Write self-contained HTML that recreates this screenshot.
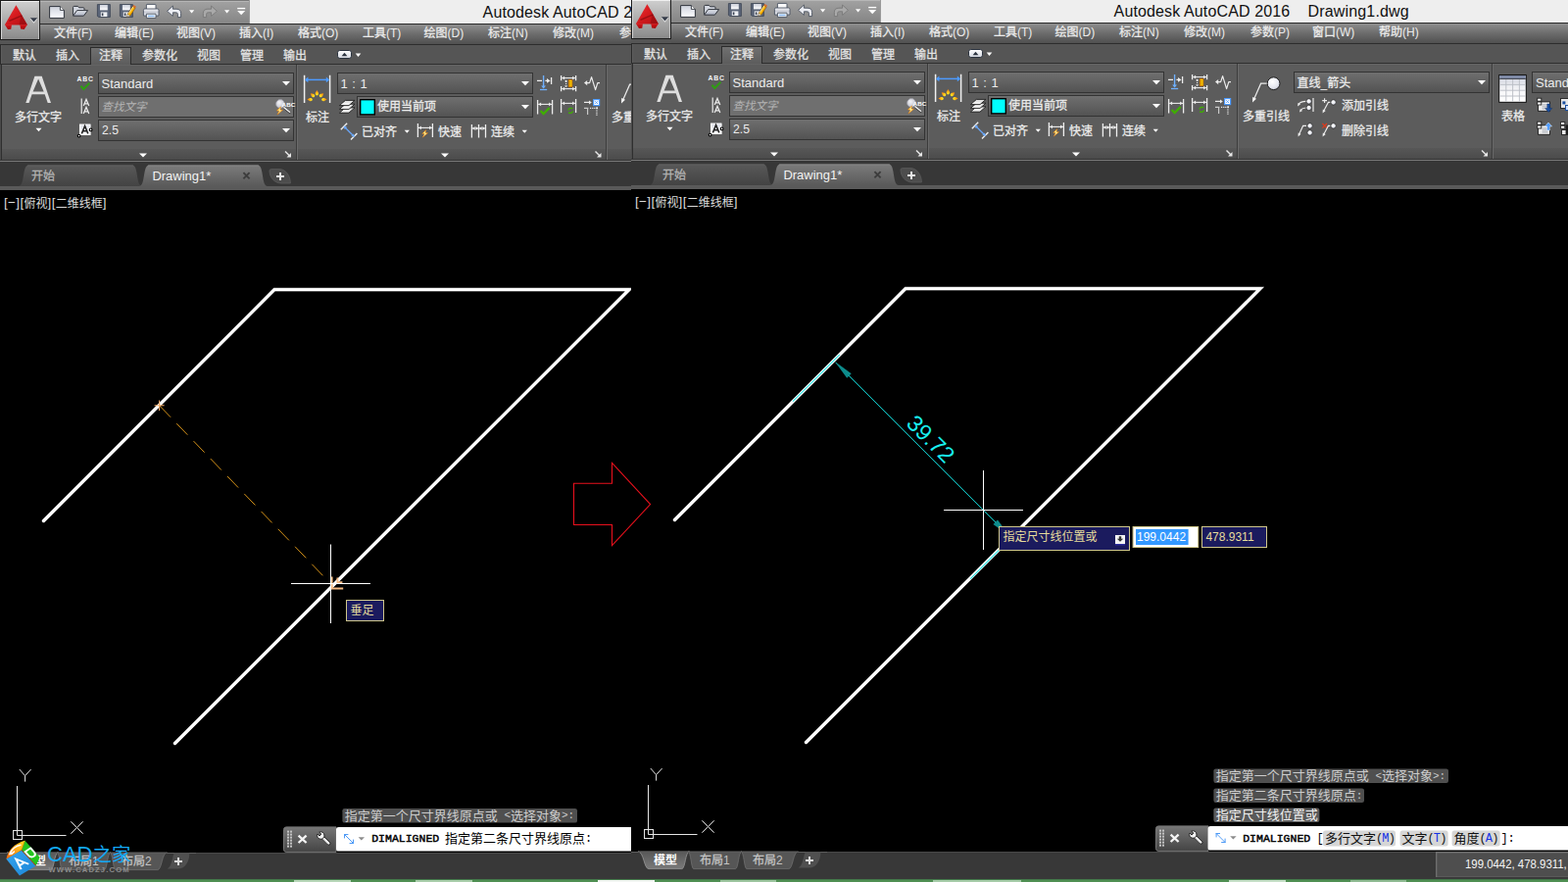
<!DOCTYPE html>
<html><head><meta charset="utf-8"><title>AutoCAD</title>
<style>
html,body{margin:0;padding:0;background:#000}
body{width:1600px;height:900px;overflow:hidden;position:relative;font-family:"Liberation Sans","Noto Sans CJK SC",sans-serif}
.w{position:absolute;overflow:hidden}
.a{position:absolute;left:0;top:0}
.t{position:absolute;white-space:pre;display:block}
.h{color:transparent;overflow:hidden}
.s{-webkit-text-stroke:0.26px}
</style></head><body>
<svg width="0" height="0" style="position:absolute"><defs>
<linearGradient id="gQat" x1="0" y1="0" x2="0" y2="1"><stop offset="0" stop-color="#a3a3a3"/><stop offset="1" stop-color="#858585"/></linearGradient>
<linearGradient id="gMenu" x1="0" y1="0" x2="0" y2="1"><stop offset="0" stop-color="#8e8e8e"/><stop offset="0.5" stop-color="#6c6c6c"/><stop offset="1" stop-color="#505050"/></linearGradient>
<linearGradient id="gStrip" x1="0" y1="0" x2="0" y2="1"><stop offset="0" stop-color="#575757"/><stop offset="1" stop-color="#4b4b4b"/></linearGradient>
<linearGradient id="gApp" x1="0" y1="0" x2="0" y2="1"><stop offset="0" stop-color="#cfcfcf"/><stop offset="1" stop-color="#8a8a8a"/></linearGradient>
<radialGradient id="gBall" cx="0.4" cy="0.35" r="0.8"><stop offset="0" stop-color="#ffffff"/><stop offset="0.6" stop-color="#e4e6ee"/><stop offset="1" stop-color="#b8bccb"/></radialGradient>
<linearGradient id="gFlame" x1="0" y1="0" x2="1" y2="0"><stop offset="0" stop-color="#fff02a"/><stop offset="0.45" stop-color="#ffc018"/><stop offset="1" stop-color="#ff7a00"/></linearGradient>
<linearGradient id="gBolt" x1="0" y1="0" x2="1" y2="1"><stop offset="0" stop-color="#ffb000"/><stop offset="0.5" stop-color="#fff6a0"/><stop offset="1" stop-color="#ff8a00"/></linearGradient>
<linearGradient id="gPaper" x1="0" y1="0" x2="0" y2="1"><stop offset="0" stop-color="#dcdfe8"/><stop offset="1" stop-color="#ffffff"/></linearGradient>
<linearGradient id="gLayer" x1="0" y1="0" x2="0" y2="1"><stop offset="0" stop-color="#d6d6d6"/><stop offset="1" stop-color="#ffffff"/></linearGradient>
<linearGradient id="gTable" x1="0" y1="0" x2="0" y2="1"><stop offset="0" stop-color="#cdd1dc"/><stop offset="0.55" stop-color="#f6f6f8"/><stop offset="1" stop-color="#ffffff"/></linearGradient>
<radialGradient id="gLens" cx="0.4" cy="0.35" r="0.8"><stop offset="0" stop-color="#f4f4f8"/><stop offset="1" stop-color="#b4b6c2"/></radialGradient>
<linearGradient id="gCmd" x1="0" y1="0" x2="0" y2="1"><stop offset="0" stop-color="#767676"/><stop offset="1" stop-color="#444444"/></linearGradient>
<linearGradient id="gLay" x1="0" y1="0" x2="0" y2="1"><stop offset="0" stop-color="#585858"/><stop offset="1" stop-color="#7a7a7a"/></linearGradient>
<linearGradient id="gRedA" x1="0" y1="0" x2="1" y2="1"><stop offset="0" stop-color="#f03034"/><stop offset="0.5" stop-color="#d41a1e"/><stop offset="1" stop-color="#b01014"/></linearGradient>
<linearGradient id="gFoot" x1="0" y1="0" x2="0" y2="1"><stop offset="0" stop-color="#d81418"/><stop offset="1" stop-color="#a40a0e"/></linearGradient>
<linearGradient id="gDocI" x1="0" y1="0" x2="0" y2="1"><stop offset="0" stop-color="#cfd3dd"/><stop offset="1" stop-color="#fbfbfd"/></linearGradient>
<linearGradient id="gFold" x1="0" y1="0" x2="0" y2="1"><stop offset="0" stop-color="#e2e5ec"/><stop offset="1" stop-color="#aab0c0"/></linearGradient>
<linearGradient id="gPrn" x1="0" y1="0" x2="0" y2="1"><stop offset="0" stop-color="#f4f5f8"/><stop offset="0.5" stop-color="#c9ccd6"/><stop offset="1" stop-color="#eceef2"/></linearGradient>
<linearGradient id="gCubeA" x1="0" y1="0" x2="1" y2="1"><stop offset="0" stop-color="#36a6f0"/><stop offset="1" stop-color="#1c86d8"/></linearGradient><linearGradient id="gCubeC" x1="0" y1="1" x2="1" y2="0"><stop offset="0" stop-color="#ff6a10"/><stop offset="1" stop-color="#ffe020"/></linearGradient>
<linearGradient id="gTab" x1="0" y1="0" x2="0" y2="1"><stop offset="0" stop-color="#707070"/><stop offset="1" stop-color="#5c5c5c"/></linearGradient>
<linearGradient id="gMin" x1="0" y1="0" x2="0" y2="1"><stop offset="0" stop-color="#ffffff"/><stop offset="1" stop-color="#d4d8e0"/></linearGradient>
<linearGradient id="gCombo" x1="0" y1="0" x2="0" y2="1"><stop offset="0" stop-color="#6f6f6f"/><stop offset="1" stop-color="#535353"/></linearGradient>
<linearGradient id="gDocI2" x1="0" y1="0" x2="0" y2="1"><stop offset="0" stop-color="#595959"/><stop offset="1" stop-color="#434343"/></linearGradient>
<linearGradient id="gDoc" x1="0" y1="0" x2="0" y2="1"><stop offset="0" stop-color="#7c7c7c"/><stop offset="1" stop-color="#5a5a5a"/></linearGradient>
</defs></svg>
<div class="w" style="left:0px;top:0px;width:644px;height:900px">
<svg class="a" width="644" height="900" viewBox="0 0 644 900">
<rect x="254" y="0" width="390" height="24" fill="#eeeeee" />
<rect x="41" y="0" width="214" height="24" fill="url(#gQat)" />
<rect x="41" y="0" width="214" height="1" fill="#7a7a7a" />
<rect x="41" y="1" width="214" height="1" fill="#b6b6b6" />
<rect x="254" y="0" width="1" height="24" fill="#9a9a9a" />
<rect x="41" y="24" width="603" height="1" fill="#2b2b2b" />
<rect x="41" y="25" width="603" height="20" fill="url(#gMenu)" />
<rect x="0" y="45" width="644" height="1" fill="#2d2d2d" />
<rect x="0" y="41" width="41" height="4" fill="#555555" />
<rect x="0" y="46" width="644" height="19" fill="#555555" />
<rect x="0" y="65" width="644" height="1" fill="#2e2e2e" />
<rect x="0" y="66" width="644" height="99" fill="#5c5c5c" />
<rect x="0" y="152" width="644" height="11" fill="url(#gStrip)" />
<rect x="0" y="163" width="644" height="1" fill="#343434" />
<rect x="0" y="164" width="644" height="1" fill="#787878" />
<rect x="0" y="165" width="644" height="25" fill="#373737" />
<rect x="0" y="190" width="644" height="4" fill="#5a5a5a" />
<rect x="0" y="870" width="644" height="29" fill="#383838" />
<rect x="0" y="870" width="644" height="1" fill="#484848" />
<rect x="0" y="0" width="41" height="41" fill="#1c1c1c" />
<rect x="1" y="1" width="39" height="39" fill="url(#gApp)" />
<polyline points="44.5,531.5 280,295.5 642,295.5 178.5,758.5" fill="none" stroke="#fff" stroke-width="3.4" stroke-linecap="round" stroke-linejoin="miter"/>
<rect x="0" y="46" width="1" height="19" fill="#2b2b2b" />
<rect x="1" y="46" width="1" height="19" fill="#5e5e5e" />
<rect x="92" y="48" width="42" height="18" fill="#2b2b2b" />
<rect x="93" y="49" width="40" height="17" fill="url(#gTab)" />
<rect x="344.5" y="51.5" width="14" height="8" rx="2.2" fill="url(#gMin)" stroke="#2c3440" stroke-width="1"/>
<path d="M348.6 57.2L351.5 53.8L354.4 57.2Z" fill="#2c3440" stroke="none" stroke-width="1" />
<path d="M362.7 54.6L368.3 54.6L365.5 58Z" fill="#fff" stroke="none" stroke-width="1" />
<rect x="0" y="66" width="1" height="97" fill="#4a4a4a" />
<rect x="1" y="66" width="1" height="97" fill="#2f2f2f" />
<rect x="2" y="66" width="644" height="1" fill="#646464" />
<path d="M26.3 105L35.4 77.8H42.7L52 105H48.7L45.7 96.3H32.6L29.6 105ZM33.6 93.5H44.7L39.1 80.6Z" fill="#dedede" stroke="none" stroke-width="1" fill-rule="evenodd"/>
<path d="M36.5 130.8L42.5 130.8L39.5 134.2Z" fill="#fff" stroke="none" stroke-width="1" />
<rect x="100" y="74" width="200" height="22" fill="#333" />
<rect x="101" y="75" width="198" height="20" fill="url(#gCombo)" />
<path d="M288 83.1L296 83.1L292 87.3Z" fill="#fff" stroke="none" stroke-width="1" />
<rect x="100" y="98" width="200" height="22" fill="#333" />
<rect x="101" y="99" width="198" height="20" fill="#6f6f6f" />
<rect x="100" y="122" width="200" height="22" fill="#333" />
<rect x="101" y="123" width="198" height="20" fill="url(#gCombo)" />
<path d="M288 131.1L296 131.1L292 135.3Z" fill="#fff" stroke="none" stroke-width="1" />
<path d="M142 156.6L150 156.6L146 160.6Z" fill="#fff" stroke="none" stroke-width="1" />
<path d="M291 154.5L296 159.5" fill="none" stroke="#e8e8e8" stroke-width="1.4" />
<path d="M297 156L297 160.5L292.5 160.5Z" fill="#e8e8e8" stroke="none" stroke-width="1" />
<rect x="302" y="66" width="1" height="97" fill="#3c3c3c" />
<rect x="303" y="66" width="1" height="97" fill="#6a6a6a" />
<rect x="344" y="74" width="200" height="22" fill="#333" />
<rect x="345" y="75" width="198" height="20" fill="url(#gCombo)" />
<path d="M532 83.1L540 83.1L536 87.3Z" fill="#fff" stroke="none" stroke-width="1" />
<rect x="364" y="98" width="180" height="22" fill="#333" />
<rect x="365" y="99" width="178" height="20" fill="url(#gCombo)" />
<path d="M532 107.1L540 107.1L536 111.3Z" fill="#fff" stroke="none" stroke-width="1" />
<rect x="367" y="101" width="16" height="16.6" fill="#000" />
<rect x="368.4" y="102.4" width="13.2" height="13.8" fill="#00ffff" />
<path d="M412.7 132.8L417.9 132.8L415.3 135.8Z" fill="#fff" stroke="none" stroke-width="1" />
<path d="M532.7 132.8L537.9 132.8L535.3 135.8Z" fill="#fff" stroke="none" stroke-width="1" />
<path d="M450 156.6L458 156.6L454 160.6Z" fill="#fff" stroke="none" stroke-width="1" />
<path d="M607.5 154.5L612.5 159.5" fill="none" stroke="#e8e8e8" stroke-width="1.4" />
<path d="M613.5 156L613.5 160.5L609 160.5Z" fill="#e8e8e8" stroke="none" stroke-width="1" />
<rect x="618" y="66" width="1" height="97" fill="#3c3c3c" />
<rect x="619" y="66" width="1" height="97" fill="#6a6a6a" />
<path d="M19 190C25.5 190 22.5 168.5 29 168.5L135 168.5C141.5 168.5 138.5 190 145 190Z" fill="url(#gDocI2)" />
<path d="M28 169H136" fill="none" stroke="#666" stroke-width="0.8" />
<path d="M142 190C148.5 190 145.5 168.5 152 168.5L263 168.5C269.5 168.5 266.5 190 273 190Z" fill="url(#gDoc)" />
<path d="M151 169H264" fill="none" stroke="#8c8c8c" stroke-width="0.8" />
<path d="M248.4 176.2L254.6 182.4M254.6 176.2L248.4 182.4" fill="none" stroke="#3c3c3c" stroke-width="1.9" />
<path d="M275 174C275 173 276 172.6 278 172.6L285 172.6C292 172.6 296.4 180 296.4 187L287 187C280 187 275 181 275 174Z" fill="#4d4d4d" stroke="#5c5c5c" stroke-width="0.8" />
<path d="M282 180h8M286 176v8" fill="none" stroke="#e6e6e6" stroke-width="2" />
<path d="M82.4 87.8L85.4 91L91.4 84.6" fill="none" stroke="#2f9e12" stroke-width="2.1" />
<path d="M83.2 100.5V116" fill="none" stroke="#ececec" stroke-width="1.2" />
<path d="M85.2 108L88 101.4L90.8 108M86.2 105.8H89.8" fill="none" stroke="#ececec" stroke-width="1.2" />
<path d="M85.2 116L88 109.4L90.8 116M86.2 113.8H89.8" fill="none" stroke="#ececec" stroke-width="1.2" />
<rect x="81" y="126.7" width="11.4" height="11.2" fill="url(#gPaper)" />
<rect x="81.5" y="127.2" width="10.4" height="10.2" fill="none" stroke="#fafafa" stroke-width="1"/>
<path d="M83.4 136.4L86.6 128.6L89.8 136.4M84.6 133.8H88.6" fill="none" stroke="#222" stroke-width="1.5" />
<circle cx="92.6" cy="132.4" r="1.35" fill="#fff" stroke="#000" stroke-width="1.1"/>
<circle cx="80.6" cy="138.6" r="1.35" fill="#fff" stroke="#000" stroke-width="1.1"/>
<circle cx="286" cy="106" r="4.4" fill="url(#gLens)" stroke="#9a9aa4" stroke-width="0.8"/>
<path d="M289.6 109.8L296.4 115.2" fill="none" stroke="#3a3a3a" stroke-width="2.6" />
<path d="M289.4 109.4L296.2 114.8" fill="none" stroke="#f0f0f0" stroke-width="1.4" />
<g transform="translate(285.4 112.8) scale(0.95)"><path d="M1.2 -4.2L-3.2 0.2L-0.6 0.4L-2.6 4.4L3.4 -0.6L0.6 -0.8Z" fill="url(#gBolt)" stroke="#e07000" stroke-width="0.5"/></g>
<path d="M310.6 76.8V105M336.6 76.8V105" fill="none" stroke="#efefef" stroke-width="1.5" />
<path d="M312 81.4H335" fill="none" stroke="#4d9bff" stroke-width="1.5" />
<path d="M311 81.4l3.4 -2.8v5.6ZM336.2 81.4l-3.4 -2.8v5.6Z" fill="#4d9bff" stroke="none" stroke-width="1" />
<g transform="translate(323.4 95.2) rotate(-90)"><path d="M-2.2 0C-2.2 -1.7 -0.4 -1.9 0.6 -1.5L3.2 0L0.6 1.5C-0.4 1.9 -2.2 1.7 -2.2 0Z" fill="url(#gFlame)"/></g>
<g transform="translate(319.2 97.3) rotate(-140)"><path d="M-2.2 0C-2.2 -1.7 -0.4 -1.9 0.6 -1.5L3.2 0L0.6 1.5C-0.4 1.9 -2.2 1.7 -2.2 0Z" fill="url(#gFlame)"/></g>
<g transform="translate(327.8 97.3) rotate(-40)"><path d="M-2.2 0C-2.2 -1.7 -0.4 -1.9 0.6 -1.5L3.2 0L0.6 1.5C-0.4 1.9 -2.2 1.7 -2.2 0Z" fill="url(#gFlame)"/></g>
<g transform="translate(316.6 101.6) rotate(180)"><path d="M-2.2 0C-2.2 -1.7 -0.4 -1.9 0.6 -1.5L3.2 0L0.6 1.5C-0.4 1.9 -2.2 1.7 -2.2 0Z" fill="url(#gFlame)"/></g>
<g transform="translate(330.4 101.6) rotate(0)"><path d="M-2.2 0C-2.2 -1.7 -0.4 -1.9 0.6 -1.5L3.2 0L0.6 1.5C-0.4 1.9 -2.2 1.7 -2.2 0Z" fill="url(#gFlame)"/></g>
<path d="M352.4 109.9H362L356 115.1H346.4Z" fill="url(#gLayer)" stroke="#1e1e1e" stroke-width="0.9" />
<path d="M352.4 106.2H362L356 111.4H346.4Z" fill="url(#gLayer)" stroke="#1e1e1e" stroke-width="0.9" />
<path d="M352.4 102.4H362L356 107.6H346.4Z" fill="url(#gLayer)" stroke="#1e1e1e" stroke-width="0.9" />
<path d="M347.8 132.2L354.2 125.8M358 142.4L364.4 136" fill="none" stroke="#f0f0f0" stroke-width="1.4" />
<path d="M351.6 129.6L361 139" fill="none" stroke="#6aa9ff" stroke-width="1.3" />
<path d="M350.60 128.60L354.21 129.80L351.80 132.21Z" fill="#6aa9ff" stroke="none" stroke-width="1" />
<path d="M362.00 140.00L358.39 138.80L360.80 136.39Z" fill="#6aa9ff" stroke="none" stroke-width="1" />
<path d="M426.4 126V140M441.4 126V140" fill="none" stroke="#f0f0f0" stroke-width="1.3" />
<path d="M427 130.4H441" fill="none" stroke="#f0f0f0" stroke-width="1.1" />
<path d="M427.2 130.4l2.7 -1.9v3.8Z" fill="#f0f0f0" stroke="none" stroke-width="1" />
<path d="M440.8 130.4l-2.7 -1.9v3.8Z" fill="#f0f0f0" stroke="none" stroke-width="1" />
<g transform="translate(433.6 136.2) scale(0.9)"><path d="M1.2 -4.2L-3.2 0.2L-0.6 0.4L-2.6 4.4L3.4 -0.6L0.6 -0.8Z" fill="url(#gBolt)" stroke="#e07000" stroke-width="0.5"/></g>
<path d="M481.4 127V140.6M488.5 127V140.6M495.5 127V140.6" fill="none" stroke="#f0f0f0" stroke-width="1.3" />
<path d="M482 131H488" fill="none" stroke="#f0f0f0" stroke-width="1" />
<path d="M482.2 131l2.3 -1.9v3.8Z" fill="#f0f0f0" stroke="none" stroke-width="1" />
<path d="M487.8 131l-2.3 -1.9v3.8Z" fill="#f0f0f0" stroke="none" stroke-width="1" />
<path d="M489 131H495" fill="none" stroke="#f0f0f0" stroke-width="1" />
<path d="M489.2 131l2.3 -1.9v3.8Z" fill="#f0f0f0" stroke="none" stroke-width="1" />
<path d="M494.8 131l-2.3 -1.9v3.8Z" fill="#f0f0f0" stroke="none" stroke-width="1" />
<path d="M548 82.4H553M556.4 82.4H559" fill="none" stroke="#ececec" stroke-width="1.3" />
<path d="M561.6 82.4l-3.6 -2.4v4.8Z" fill="#ececec" stroke="none" stroke-width="1" />
<path d="M562.6 79V86" fill="none" stroke="#ececec" stroke-width="1.3" />
<path d="M554.6 77V88" fill="none" stroke="#6fb0ff" stroke-width="1.4" />
<path d="M554.6 90.6l-2.4 -3h4.8Z" fill="#6fb0ff" stroke="none" stroke-width="1" />
<path d="M551 91.5H558.2" fill="none" stroke="#6fb0ff" stroke-width="1.3" />
<path d="M572.6 77V82.2M587.6 77V82.2M572.6 88V93.2M587.6 88V93.2" fill="none" stroke="#ececec" stroke-width="1.3" />
<path d="M573.2 79.6H587" fill="none" stroke="#ececec" stroke-width="1.1" />
<path d="M573.4 79.6l2.7 -1.9v3.8Z" fill="#ececec" stroke="none" stroke-width="1" />
<path d="M586.8 79.6l-2.7 -1.9v3.8Z" fill="#ececec" stroke="none" stroke-width="1" />
<path d="M573.2 90.6H587" fill="none" stroke="#ececec" stroke-width="1.1" />
<path d="M573.4 90.6l2.7 -1.9v3.8Z" fill="#ececec" stroke="none" stroke-width="1" />
<path d="M586.8 90.6l-2.7 -1.9v3.8Z" fill="#ececec" stroke="none" stroke-width="1" />
<path d="M577.6 83V87.6" fill="none" stroke="#ececec" stroke-width="1.2" stroke-dasharray="1 1"/>
<path d="M577.6 81.6l-1.6 1.6h3.2ZM577.6 89l-1.6 -1.6h3.2Z" fill="#ececec" stroke="none" stroke-width="1" />
<rect x="580" y="81.2" width="4" height="7.8" fill="#ffd400" />
<rect x="580.3" y="81.5" width="3.6" height="7.2" fill="none" stroke="#b86200" stroke-width="0.8"/>
<path d="M580.6 83.4h2M580.6 85.2h2M580.6 87h2" fill="none" stroke="#b86200" stroke-width="0.7" />
<path d="M598.5 84.6H601.6L603.6 78.6L607.6 91.6L609.8 84.6H612" fill="none" stroke="#ececec" stroke-width="1.2" stroke-linejoin="round"/>
<path d="M596 84.6l3.2 -2.6v5.2Z" fill="#ececec" stroke="none" stroke-width="1" />
<path d="M548.6 102V116.4M563.6 102V116.4" fill="none" stroke="#ececec" stroke-width="1.3" />
<path d="M549.2 106.4H563" fill="none" stroke="#ececec" stroke-width="1.1" />
<path d="M549.4 106.4l2.7 -1.9v3.8Z" fill="#ececec" stroke="none" stroke-width="1" />
<path d="M562.8 106.4l-2.7 -1.9v3.8Z" fill="#ececec" stroke="none" stroke-width="1" />
<path d="M551.6 113L554.6 116L560.6 110" fill="none" stroke="#3fae00" stroke-width="2.4" />
<path d="M572.6 101V115M587.6 101V115" fill="none" stroke="#ececec" stroke-width="1.3" />
<path d="M573.2 105.4H587" fill="none" stroke="#ececec" stroke-width="1.1" />
<path d="M573.4 105.4l2.7 -1.9v3.8Z" fill="#ececec" stroke="none" stroke-width="1" />
<path d="M586.8 105.4l-2.7 -1.9v3.8Z" fill="#ececec" stroke="none" stroke-width="1" />
<path d="M580 112.6A2.3 2.3 0 0 1 583.6 110.8M584.4 113.2A2.3 2.3 0 0 1 580.8 115" fill="none" stroke="#3fae00" stroke-width="1.2" />
<path d="M584.6 110l-2.4 -0.2l1.6 2ZM579.8 115.8l2.4 0.2l-1.6 -2Z" fill="#3fae00" stroke="none" stroke-width="1" />
<path d="M596 104.4H601.6" fill="none" stroke="#ececec" stroke-width="1.2" />
<path d="M603.8 104.4l-2.8 -2v4Z" fill="#ececec" stroke="none" stroke-width="1" />
<rect x="605" y="101" width="7.2" height="7.2" fill="#4d9bff" />
<rect x="606.2" y="102.2" width="4.8" height="4.8" fill="#fff" />
<path d="M607.2 103.2l2.8 2.8M610 103.2l-2.8 2.8" fill="none" stroke="#4d9bff" stroke-width="0.9" />
<path d="M596 110.4H600.4M599.6 110V117" fill="none" stroke="#c8c8c8" stroke-width="1.2" />
<rect x="602" y="109.8" width="1.2" height="1.2" fill="#ececec" />
<rect x="604.2" y="109.8" width="1.2" height="1.2" fill="#ececec" />
<rect x="606.2" y="109.8" width="1.2" height="1.2" fill="#ececec" />
<rect x="608.2" y="109.4" width="1.8" height="1.8" fill="#f4f4f4" />
<rect x="608.3" y="112.4" width="1.3" height="1.1" fill="#ececec" />
<rect x="608.3" y="114.6" width="1.3" height="1.1" fill="#ececec" />
<rect x="608.3" y="116.6" width="1.3" height="1.1" fill="#ececec" />
<path d="M649 86.2H642.6L635.2 103" fill="none" stroke="#ececec" stroke-width="1.2" />
<path d="M634.00 105.60L634.19 100.00L638.03 101.70Z" fill="#f4f4f4" stroke="none" stroke-width="1" />
<circle cx="655.6" cy="86.2" r="6.4" fill="url(#gBall)" stroke="#1c1c1c" stroke-width="1"/>
<path d="M17.5 802V852.5H67.5" fill="none" stroke="#e4e4e4" stroke-width="1" />
<rect x="13.5" y="847.5" width="9" height="9" fill="none" stroke="#e4e4e4" stroke-width="1"/>
<path d="M19.8 785L25.6 791.6L31.6 785M25.6 791.6V797.6" fill="none" stroke="#e4e4e4" stroke-width="1" />
<path d="M72.3 838.3L84.7 850.7M84.7 838.3L72.3 850.7" fill="none" stroke="#e4e4e4" stroke-width="1" />
<rect x="1" y="1" width="39" height="1" fill="#f0f0f0" />
<rect x="1" y="2" width="1" height="38" fill="#d6d6d6" />
<rect x="39" y="2" width="1" height="38" fill="#bcbcbc" />
<path d="M16.4 5.2L28 25.4H4.8Z" fill="url(#gRedA)" stroke="none" stroke-width="1" />
<path d="M16.4 5.2L28 25.4H19.6L21.6 15.2Z" fill="#8a0c10" stroke="none" stroke-width="1" opacity="0.5"/>
<path d="M9 20.8L22.2 15.2L22.6 16.6L9.8 22Z" fill="#6e080c" stroke="none" stroke-width="1" opacity="0.55"/>
<path d="M5 25.2H11.9L11.3 29.7L8 29.9Z" fill="url(#gFoot)" stroke="none" stroke-width="1" />
<path d="M20.3 25.2H27.8L24.7 29.9L21.1 29.5Z" fill="url(#gFoot)" stroke="none" stroke-width="1" />
<path d="M30.8 18.2H38.2L34.5 22.8Z" fill="#f4f4f4" stroke="none" stroke-width="1" transform="translate(0 0.9)"/>
<path d="M30.8 18.2H38.2L34.5 22.6Z" fill="#363d4a" stroke="none" stroke-width="1" />
<path d="M50.6 6.6H61.4L65.4 10.4V18.4H50.6Z" fill="url(#gDocI)" stroke="#30343c" stroke-width="1" />
<path d="M61.4 6.6V10.4H65.4" fill="#fff" stroke="#30343c" stroke-width="0.9" />
<path d="M74.6 15.8V7.4Q74.6 6.4 75.6 6.4H79.4L80.6 7.8H85Q86 7.8 86 8.8V10.4" fill="#d5d9e2" stroke="#30343c" stroke-width="1" />
<path d="M74.6 16.2L78.6 10.6H89.6L85.4 16.2Z" fill="url(#gFold)" stroke="#30343c" stroke-width="1" />
<path d="M99.4 4.6H112.4V17.4H100.6L99.4 16.2Z" fill="#5b6578" stroke="#3a4252" stroke-width="0.8" />
<rect x="102" y="5" width="7.8" height="5.4" fill="url(#gDocI)" />
<rect x="102.8" y="12.4" width="6.6" height="4.6" fill="#eef0f4" />
<rect x="103.8" y="13.4" width="1.6" height="2.8" fill="#3a4252" />
<path d="M122.4 4.6H135.4V17.4H123.6L122.4 16.2Z" fill="#5b6578" stroke="#3a4252" stroke-width="0.8" />
<rect x="125" y="5" width="7.8" height="5.4" fill="url(#gDocI)" />
<rect x="125.8" y="12.4" width="6.6" height="4.6" fill="#eef0f4" />
<rect x="126.8" y="13.4" width="1.6" height="2.8" fill="#3a4252" />
<path d="M130.2 14.4L135.4 6.4L138 8.2L132.8 16.2L129.8 17.2Z" fill="#ffb400" stroke="#7a4a00" stroke-width="0.6" />
<path d="M135.4 6.4L136.4 5L139 6.8L138 8.2Z" fill="#d86a2a" stroke="none" stroke-width="1" />
<path d="M130.2 14.4L129.8 17.2L132.8 16.2Z" fill="#f4f4f4" stroke="#555" stroke-width="0.4" />
<path d="M131.4 13.6L136 6.8" fill="none" stroke="#fff6c0" stroke-width="0.8" />
<path d="M149.4 10V5Q149.4 4.4 150 4.4H158.4Q159 4.4 159 5V10" fill="#fafafa" stroke="#4a5262" stroke-width="0.9" />
<path d="M146.4 16V10.4Q146.4 9 147.8 9H160.6Q162 9 162 10.4V16Z" fill="url(#gPrn)" stroke="#4a5262" stroke-width="0.9" />
<path d="M149.4 14.2H159V18.4H149.4Z" fill="#fff" stroke="#4a5262" stroke-width="0.9" />
<rect x="150.8" y="15.6" width="6.8" height="1.6" fill="#8ab8ee" />
<path d="M170.6 11.4L176.4 6V9.2H180Q184.6 9.2 184.6 13.6V17.6H181.4V14.4Q181.4 12.8 179.6 12.8H176.4V16.4Z" fill="#eceef4" stroke="#4c5260" stroke-width="0.9" />
<path d="M193 10.2H198.2L195.6 13.4Z" fill="#fff" stroke="none" stroke-width="1" />
<path d="M221.4 11.4L215.6 6V9.2H212Q207.4 9.2 207.4 13.6V17.6H210.6V14.4Q210.6 12.8 212.4 12.8H215.6V16.4Z" fill="#a9a9a9" stroke="#787878" stroke-width="0.9" />
<path d="M229 10.2H234.2L231.6 13.4Z" fill="#fff" stroke="none" stroke-width="1" />
<path d="M242.2 8.6H250.2" fill="none" stroke="#fff" stroke-width="1.4" />
<path d="M242.2 11H250.2L246.2 15.2Z" fill="#fff" stroke="none" stroke-width="1" />
<path d="M112 870C115.3 870 115.3 887.6 118 887.6L160.8 887.6C165.165 887.6 165.165 870 170.5 870Z" fill="#565656" stroke="#6c6c6c" stroke-width="0.9"/>
<path d="M58 870C61.19 870 61.19 887.6 63.8 887.6L106.5 887.6C109.425 887.6 109.425 870 113 870Z" fill="#565656" stroke="#6c6c6c" stroke-width="0.9"/>
<path d="M7 870C13.05 870 13.05 887.6 18 887.6L51.8 887.6C55.265 887.6 55.265 870 59.5 870Z" fill="url(#gLay)" stroke="#909090" stroke-width="0.9"/>
<rect x="0" y="870" width="200" height="1" fill="#5c5c5c" />
<path d="M178 870H193.4C193.4 878 190 886.6 181 886.6H170.5C176 884 176 872 178 870Z" fill="#505050" stroke="none" stroke-width="1" />
<path d="M178 879.1h8M182 875.1v8" fill="none" stroke="#dcdcdc" stroke-width="2" />
<line x1="163" y1="414.2" x2="335.6" y2="593.7" stroke="#e09a1a" stroke-width="0.95" stroke-dasharray="16 8.9"/>
<path d="M157.6 413.8H167.6M162.6 408.4V419" fill="none" stroke="#f2aa6a" stroke-width="1.1" />
<path d="M338.6 588.4V600.4H350.2" fill="none" stroke="#f8bd86" stroke-width="2" />
<path d="M344.4 589.6V594.2H349.4" fill="none" stroke="#f8bd86" stroke-width="1.8" />
<path d="M297 595.5H378M337.5 555.5V636" fill="none" stroke="#ffffff" stroke-width="1" />
<rect x="353.5" y="612.5" width="38" height="21" fill="#1b1b5e" stroke="#cfc78a" stroke-width="1"/>
<rect x="349.4" y="825" width="239.6" height="14.6" rx="2.2" fill="#4f4f4f"/>
<path d="M289.5 846.5q0 -2.6 2.6 -2.6H343V869.4H292.1q-2.6 0 -2.6 -2.6Z" fill="url(#gCmd)" stroke="#767676" stroke-width="1"/>
<rect x="293" y="847.6" width="2" height="2" fill="#c4c4c4" />
<rect x="296" y="847.6" width="2" height="2" fill="#c4c4c4" />
<rect x="293" y="850.6" width="2" height="2" fill="#c4c4c4" />
<rect x="296" y="850.6" width="2" height="2" fill="#c4c4c4" />
<rect x="293" y="853.6" width="2" height="2" fill="#c4c4c4" />
<rect x="296" y="853.6" width="2" height="2" fill="#c4c4c4" />
<rect x="293" y="856.6" width="2" height="2" fill="#c4c4c4" />
<rect x="296" y="856.6" width="2" height="2" fill="#c4c4c4" />
<rect x="293" y="859.6" width="2" height="2" fill="#c4c4c4" />
<rect x="296" y="859.6" width="2" height="2" fill="#c4c4c4" />
<rect x="293" y="862.6" width="2" height="2" fill="#c4c4c4" />
<rect x="296" y="862.6" width="2" height="2" fill="#c4c4c4" />
<path d="M304.6 852.6l8 7.4M312.6 852.6l-8 7.4" fill="none" stroke="#f4f4f4" stroke-width="2.3" />
<g transform="translate(330.6 855.8) rotate(-45)"><path d="M-1.5 -2.5V7.6Q0 9.4 1.5 7.6V-2.5Z" fill="#f6f6f6" stroke="#1e1e1e" stroke-width="0.9"/><path d="M-1.35 -8.1A3.7 3.7 0 1 0 1.35 -8.1V-5.2H-1.35Z" fill="#f6f6f6" stroke="#1e1e1e" stroke-width="0.9"/><path d="M-0.9 -1.4V6.6" stroke="#c8c8c8" stroke-width="0.7"/></g>
<path d="M343 846.6q0 -2.6 2.6 -2.6H743V868.6H345.6q-2.6 0 -2.6 -2.6Z" fill="#ffffff"/>
<path d="M351.5 851.5L360.5 860.5M351.5 851.2V855.4M351.2 851.5H355.4M360.5 860.8V856.6M360.8 860.5H356.6" fill="none" stroke="#4f9bf6" stroke-width="1" />
<path d="M365.6 854.2h6.4l-3.2 3.4Z" fill="#8c8c8c" stroke="none" stroke-width="1" />
</svg>
<span class="t s" style="left:55.0px;top:27.3px;font-size:12px;line-height:14px;width:26.0px;color:#ececec">文件</span>
<span class="t" style="left:79.00px;top:27.34px;font-size:12px;line-height:14px;color:#ececec">(F)</span>
<span class="t s" style="left:117.0px;top:27.3px;font-size:12px;line-height:14px;width:26.0px;color:#ececec">编辑</span>
<span class="t" style="left:141.00px;top:27.34px;font-size:12px;line-height:14px;color:#ececec">(E)</span>
<span class="t s" style="left:180.0px;top:27.3px;font-size:12px;line-height:14px;width:26.0px;color:#ececec">视图</span>
<span class="t" style="left:204.00px;top:27.34px;font-size:12px;line-height:14px;color:#ececec">(V)</span>
<span class="t s" style="left:244.0px;top:27.3px;font-size:12px;line-height:14px;width:26.0px;color:#ececec">插入</span>
<span class="t" style="left:268.00px;top:27.34px;font-size:12px;line-height:14px;color:#ececec">(I)</span>
<span class="t s" style="left:304.0px;top:27.3px;font-size:12px;line-height:14px;width:26.0px;color:#ececec">格式</span>
<span class="t" style="left:328.00px;top:27.34px;font-size:12px;line-height:14px;color:#ececec">(O)</span>
<span class="t s" style="left:370.0px;top:27.3px;font-size:12px;line-height:14px;width:26.0px;color:#ececec">工具</span>
<span class="t" style="left:394.00px;top:27.34px;font-size:12px;line-height:14px;color:#ececec">(T)</span>
<span class="t s" style="left:432.5px;top:27.3px;font-size:12px;line-height:14px;width:26.0px;color:#ececec">绘图</span>
<span class="t" style="left:456.50px;top:27.34px;font-size:12px;line-height:14px;color:#ececec">(D)</span>
<span class="t s" style="left:498.0px;top:27.3px;font-size:12px;line-height:14px;width:26.0px;color:#ececec">标注</span>
<span class="t" style="left:522.00px;top:27.34px;font-size:12px;line-height:14px;color:#ececec">(N)</span>
<span class="t s" style="left:564.0px;top:27.3px;font-size:12px;line-height:14px;width:26.0px;color:#ececec">修改</span>
<span class="t" style="left:588.00px;top:27.34px;font-size:12px;line-height:14px;color:#ececec">(M)</span>
<span class="t s" style="left:632.0px;top:27.3px;font-size:12px;line-height:14px;width:26.0px;color:#ececec">参数</span>
<span class="t" style="left:656.00px;top:27.34px;font-size:12px;line-height:14px;color:#ececec">(P)</span>
<span class="t" style="left:492.60px;top:2.56px;font-size:16px;line-height:19px;color:#111;letter-spacing:0.13px">Autodesk AutoCAD 2016</span>
<span class="t" style="left:690.60px;top:2.56px;font-size:16px;line-height:19px;color:#111;letter-spacing:0.15px">Drawing1.dwg</span>
<span class="t s" style="left:13.0px;top:49.6px;font-size:12px;line-height:14px;width:26.0px;color:#e4e4e4">默认</span>
<span class="t s" style="left:57.0px;top:49.6px;font-size:12px;line-height:14px;width:26.0px;color:#e4e4e4">插入</span>
<span class="t s" style="left:101.0px;top:49.6px;font-size:12px;line-height:14px;width:26.0px;color:#e4e4e4">注释</span>
<span class="t s" style="left:145.0px;top:49.6px;font-size:12px;line-height:14px;width:38.0px;color:#e4e4e4">参数化</span>
<span class="t s" style="left:201.0px;top:49.6px;font-size:12px;line-height:14px;width:26.0px;color:#e4e4e4">视图</span>
<span class="t s" style="left:245.0px;top:49.6px;font-size:12px;line-height:14px;width:26.0px;color:#e4e4e4">管理</span>
<span class="t s" style="left:289.0px;top:49.6px;font-size:12px;line-height:14px;width:26.0px;color:#e4e4e4">输出</span>
<span class="t h" style="left:30px;top:74px;font-size:30px;line-height:34px">A</span>
<span class="t s" style="left:15.0px;top:113.2px;font-size:12px;line-height:14px;width:50.0px;color:#ececec">多行文字</span>
<span class="t" style="left:103.50px;top:77.50px;font-size:13px;line-height:16px;color:#ececec">Standard</span>
<span class="t" style="left:103.5px;top:101.8px;font-size:11.5px;line-height:14px;width:48.0px;color:#b4b4b4;font-style:italic">查找文字</span>
<span class="t" style="left:104.00px;top:126.47px;font-size:12.2px;line-height:15px;color:#ececec">2.5</span>
<span class="t s" style="left:312.0px;top:113.2px;font-size:12px;line-height:14px;width:26.0px;color:#ececec">标注</span>
<span class="t" style="left:347.50px;top:77.50px;font-size:13px;line-height:16px;color:#ececec;letter-spacing:0.5px">1 : 1</span>
<span class="t s" style="left:385.0px;top:102.3px;font-size:12px;line-height:14px;width:62.0px;color:#ececec">使用当前项</span>
<span class="t s" style="left:369.0px;top:127.8px;font-size:12px;line-height:14px;width:38.0px;color:#ececec">已对齐</span>
<span class="t s" style="left:447.0px;top:127.8px;font-size:12px;line-height:14px;width:26.0px;color:#ececec">快速</span>
<span class="t s" style="left:501.0px;top:127.8px;font-size:12px;line-height:14px;width:26.0px;color:#ececec">连续</span>
<span class="t s" style="left:624.0px;top:113.2px;font-size:12px;line-height:14px;width:50.0px;color:#ececec">多重引线</span>
<span class="t s" style="left:32.0px;top:173.0px;font-size:12px;line-height:14px;width:26.0px;color:#b4b4b4">开始</span>
<span class="t" style="left:155.40px;top:171.50px;font-size:13px;line-height:16px;color:#f2f2f2">Drawing1*</span>
<span class="t" style="left:4.00px;top:199.32px;font-size:13.5px;line-height:16px;color:#dcdcdc;letter-spacing:0.35px">[−][</span>
<span class="t" style="left:24.5px;top:200.8px;font-size:12px;line-height:14px;width:26.0px;color:#dcdcdc">俯视</span>
<span class="t" style="left:48.54px;top:199.32px;font-size:13.5px;line-height:16px;color:#dcdcdc;letter-spacing:0.35px">][</span>
<span class="t" style="left:56.7px;top:200.8px;font-size:12px;line-height:14px;width:50.0px;color:#dcdcdc">二维线框</span>
<span class="t" style="left:104.74px;top:199.32px;font-size:13.5px;line-height:16px;color:#dcdcdc;letter-spacing:0.35px">]</span>
<span class="t" style="left:78.60px;top:76.64px;font-size:6.8px;line-height:8px;color:#f4f4f4;font-weight:bold;letter-spacing:0.75px">ABC</span>
<span class="t" style="left:287.60px;top:103.35px;font-size:6.2px;line-height:7px;color:#ffffff;font-weight:bold;letter-spacing:0.1px">ABC</span>
<span class="t" style="left:23.0px;top:872.4px;font-size:12px;line-height:14px;width:26.0px;color:#ffffff;font-weight:bold">模型</span>
<span class="t s" style="left:70.0px;top:872.4px;font-size:12px;line-height:14px;width:26.0px;color:#c4c4c4">布局</span>
<span class="t" style="left:94.00px;top:872.44px;font-size:12px;line-height:14px;color:#c4c4c4">1</span>
<span class="t s" style="left:124.0px;top:872.4px;font-size:12px;line-height:14px;width:26.0px;color:#c4c4c4">布局</span>
<span class="t" style="left:148.00px;top:872.44px;font-size:12px;line-height:14px;color:#c4c4c4">2</span>
<span class="t" style="left:357.4px;top:616.2px;font-size:12px;line-height:14px;width:26.0px;color:#e6dc9c">垂足</span>
<span class="t" style="left:351.8px;top:824.5px;font-size:13px;line-height:16px;width:158.0px;color:#cdcdcd">指定第一个尺寸界线原点或</span>
<span class="t" style="left:507.80px;top:826.29px;font-size:11px;line-height:13px;color:#cdcdcd;font-family:'Liberation Mono',monospace"> &lt;</span>
<span class="t" style="left:521.0px;top:824.5px;font-size:13px;line-height:16px;width:54.0px;color:#cdcdcd">选择对象</span>
<span class="t" style="left:573.00px;top:826.29px;font-size:11px;line-height:13px;color:#cdcdcd;font-family:'Liberation Mono',monospace">&gt;:</span>
<span class="t" style="left:379.20px;top:848.82px;font-size:11.5px;line-height:14px;color:#000;font-family:'Liberation Mono',monospace;-webkit-text-stroke:0.45px #000">DIMALIGNED</span>
<span class="t" style="left:454.0px;top:847.9px;font-size:13px;line-height:16px;width:145.0px;color:#000">指定第二条尺寸界线原点</span>
<span class="t" style="left:597.00px;top:849.24px;font-size:12px;line-height:14px;color:#000;font-family:'Liberation Mono',monospace">:</span>
</div>
<div class="w" style="left:644px;top:-1px;width:956px;height:901px">
<svg class="a" width="956" height="901" viewBox="0 0 956 901">
<rect x="254" y="0" width="702" height="24" fill="#eeeeee" />
<rect x="41" y="0" width="214" height="24" fill="url(#gQat)" />
<rect x="41" y="0" width="214" height="1" fill="#7a7a7a" />
<rect x="41" y="1" width="214" height="1" fill="#b6b6b6" />
<rect x="254" y="0" width="1" height="24" fill="#9a9a9a" />
<rect x="41" y="24" width="915" height="1" fill="#2b2b2b" />
<rect x="41" y="25" width="915" height="20" fill="url(#gMenu)" />
<rect x="0" y="45" width="956" height="1" fill="#2d2d2d" />
<rect x="0" y="41" width="41" height="4" fill="#555555" />
<rect x="0" y="46" width="956" height="19" fill="#555555" />
<rect x="0" y="65" width="956" height="1" fill="#2e2e2e" />
<rect x="0" y="66" width="956" height="99" fill="#5c5c5c" />
<rect x="0" y="152" width="956" height="11" fill="url(#gStrip)" />
<rect x="0" y="163" width="956" height="1" fill="#343434" />
<rect x="0" y="164" width="956" height="1" fill="#787878" />
<rect x="0" y="165" width="956" height="25" fill="#373737" />
<rect x="0" y="190" width="956" height="4" fill="#5a5a5a" />
<rect x="0" y="870" width="956" height="29" fill="#383838" />
<rect x="0" y="870" width="956" height="1" fill="#484848" />
<rect x="0" y="0" width="41" height="41" fill="#1c1c1c" />
<rect x="1" y="1" width="39" height="39" fill="url(#gApp)" />
<polyline points="44.5,531.5 280,295.5 642,295.5 178.5,758.5" fill="none" stroke="#fff" stroke-width="3.4" stroke-linecap="round" stroke-linejoin="miter"/>
<rect x="0" y="46" width="1" height="19" fill="#2b2b2b" />
<rect x="1" y="46" width="1" height="19" fill="#5e5e5e" />
<rect x="92" y="48" width="42" height="18" fill="#2b2b2b" />
<rect x="93" y="49" width="40" height="17" fill="url(#gTab)" />
<rect x="344.5" y="51.5" width="14" height="8" rx="2.2" fill="url(#gMin)" stroke="#2c3440" stroke-width="1"/>
<path d="M348.6 57.2L351.5 53.8L354.4 57.2Z" fill="#2c3440" stroke="none" stroke-width="1" />
<path d="M362.7 54.6L368.3 54.6L365.5 58Z" fill="#fff" stroke="none" stroke-width="1" />
<rect x="0" y="66" width="1" height="97" fill="#4a4a4a" />
<rect x="1" y="66" width="1" height="97" fill="#2f2f2f" />
<rect x="2" y="66" width="956" height="1" fill="#646464" />
<path d="M26.3 105L35.4 77.8H42.7L52 105H48.7L45.7 96.3H32.6L29.6 105ZM33.6 93.5H44.7L39.1 80.6Z" fill="#dedede" stroke="none" stroke-width="1" fill-rule="evenodd"/>
<path d="M36.5 130.8L42.5 130.8L39.5 134.2Z" fill="#fff" stroke="none" stroke-width="1" />
<rect x="100" y="74" width="200" height="22" fill="#333" />
<rect x="101" y="75" width="198" height="20" fill="url(#gCombo)" />
<path d="M288 83.1L296 83.1L292 87.3Z" fill="#fff" stroke="none" stroke-width="1" />
<rect x="100" y="98" width="200" height="22" fill="#333" />
<rect x="101" y="99" width="198" height="20" fill="#6f6f6f" />
<rect x="100" y="122" width="200" height="22" fill="#333" />
<rect x="101" y="123" width="198" height="20" fill="url(#gCombo)" />
<path d="M288 131.1L296 131.1L292 135.3Z" fill="#fff" stroke="none" stroke-width="1" />
<path d="M142 156.6L150 156.6L146 160.6Z" fill="#fff" stroke="none" stroke-width="1" />
<path d="M291 154.5L296 159.5" fill="none" stroke="#e8e8e8" stroke-width="1.4" />
<path d="M297 156L297 160.5L292.5 160.5Z" fill="#e8e8e8" stroke="none" stroke-width="1" />
<rect x="302" y="66" width="1" height="97" fill="#3c3c3c" />
<rect x="303" y="66" width="1" height="97" fill="#6a6a6a" />
<rect x="344" y="74" width="200" height="22" fill="#333" />
<rect x="345" y="75" width="198" height="20" fill="url(#gCombo)" />
<path d="M532 83.1L540 83.1L536 87.3Z" fill="#fff" stroke="none" stroke-width="1" />
<rect x="364" y="98" width="180" height="22" fill="#333" />
<rect x="365" y="99" width="178" height="20" fill="url(#gCombo)" />
<path d="M532 107.1L540 107.1L536 111.3Z" fill="#fff" stroke="none" stroke-width="1" />
<rect x="367" y="101" width="16" height="16.6" fill="#000" />
<rect x="368.4" y="102.4" width="13.2" height="13.8" fill="#00ffff" />
<path d="M412.7 132.8L417.9 132.8L415.3 135.8Z" fill="#fff" stroke="none" stroke-width="1" />
<path d="M532.7 132.8L537.9 132.8L535.3 135.8Z" fill="#fff" stroke="none" stroke-width="1" />
<path d="M450 156.6L458 156.6L454 160.6Z" fill="#fff" stroke="none" stroke-width="1" />
<path d="M607.5 154.5L612.5 159.5" fill="none" stroke="#e8e8e8" stroke-width="1.4" />
<path d="M613.5 156L613.5 160.5L609 160.5Z" fill="#e8e8e8" stroke="none" stroke-width="1" />
<rect x="618" y="66" width="1" height="97" fill="#3c3c3c" />
<rect x="619" y="66" width="1" height="97" fill="#6a6a6a" />
<rect x="676" y="74" width="200" height="22" fill="#333" />
<rect x="677" y="75" width="198" height="20" fill="url(#gCombo)" />
<path d="M864 83.1L872 83.1L868 87.3Z" fill="#fff" stroke="none" stroke-width="1" />
<path d="M868 154.5L873 159.5" fill="none" stroke="#e8e8e8" stroke-width="1.4" />
<path d="M874 156L874 160.5L869.5 160.5Z" fill="#e8e8e8" stroke="none" stroke-width="1" />
<rect x="878" y="66" width="1" height="97" fill="#3c3c3c" />
<rect x="879" y="66" width="1" height="97" fill="#6a6a6a" />
<rect x="919" y="74" width="200" height="22" fill="#333" />
<rect x="920" y="75" width="198" height="20" fill="url(#gCombo)" />
<path d="M1107 83.1L1115 83.1L1111 87.3Z" fill="#fff" stroke="none" stroke-width="1" />
<path d="M19 190C25.5 190 22.5 168.5 29 168.5L135 168.5C141.5 168.5 138.5 190 145 190Z" fill="url(#gDocI2)" />
<path d="M28 169H136" fill="none" stroke="#666" stroke-width="0.8" />
<path d="M142 190C148.5 190 145.5 168.5 152 168.5L263 168.5C269.5 168.5 266.5 190 273 190Z" fill="url(#gDoc)" />
<path d="M151 169H264" fill="none" stroke="#8c8c8c" stroke-width="0.8" />
<path d="M248.4 176.2L254.6 182.4M254.6 176.2L248.4 182.4" fill="none" stroke="#3c3c3c" stroke-width="1.9" />
<path d="M275 174C275 173 276 172.6 278 172.6L285 172.6C292 172.6 296.4 180 296.4 187L287 187C280 187 275 181 275 174Z" fill="#4d4d4d" stroke="#5c5c5c" stroke-width="0.8" />
<path d="M282 180h8M286 176v8" fill="none" stroke="#e6e6e6" stroke-width="2" />
<path d="M82.4 87.8L85.4 91L91.4 84.6" fill="none" stroke="#2f9e12" stroke-width="2.1" />
<path d="M83.2 100.5V116" fill="none" stroke="#ececec" stroke-width="1.2" />
<path d="M85.2 108L88 101.4L90.8 108M86.2 105.8H89.8" fill="none" stroke="#ececec" stroke-width="1.2" />
<path d="M85.2 116L88 109.4L90.8 116M86.2 113.8H89.8" fill="none" stroke="#ececec" stroke-width="1.2" />
<rect x="81" y="126.7" width="11.4" height="11.2" fill="url(#gPaper)" />
<rect x="81.5" y="127.2" width="10.4" height="10.2" fill="none" stroke="#fafafa" stroke-width="1"/>
<path d="M83.4 136.4L86.6 128.6L89.8 136.4M84.6 133.8H88.6" fill="none" stroke="#222" stroke-width="1.5" />
<circle cx="92.6" cy="132.4" r="1.35" fill="#fff" stroke="#000" stroke-width="1.1"/>
<circle cx="80.6" cy="138.6" r="1.35" fill="#fff" stroke="#000" stroke-width="1.1"/>
<circle cx="286" cy="106" r="4.4" fill="url(#gLens)" stroke="#9a9aa4" stroke-width="0.8"/>
<path d="M289.6 109.8L296.4 115.2" fill="none" stroke="#3a3a3a" stroke-width="2.6" />
<path d="M289.4 109.4L296.2 114.8" fill="none" stroke="#f0f0f0" stroke-width="1.4" />
<g transform="translate(285.4 112.8) scale(0.95)"><path d="M1.2 -4.2L-3.2 0.2L-0.6 0.4L-2.6 4.4L3.4 -0.6L0.6 -0.8Z" fill="url(#gBolt)" stroke="#e07000" stroke-width="0.5"/></g>
<path d="M310.6 76.8V105M336.6 76.8V105" fill="none" stroke="#efefef" stroke-width="1.5" />
<path d="M312 81.4H335" fill="none" stroke="#4d9bff" stroke-width="1.5" />
<path d="M311 81.4l3.4 -2.8v5.6ZM336.2 81.4l-3.4 -2.8v5.6Z" fill="#4d9bff" stroke="none" stroke-width="1" />
<g transform="translate(323.4 95.2) rotate(-90)"><path d="M-2.2 0C-2.2 -1.7 -0.4 -1.9 0.6 -1.5L3.2 0L0.6 1.5C-0.4 1.9 -2.2 1.7 -2.2 0Z" fill="url(#gFlame)"/></g>
<g transform="translate(319.2 97.3) rotate(-140)"><path d="M-2.2 0C-2.2 -1.7 -0.4 -1.9 0.6 -1.5L3.2 0L0.6 1.5C-0.4 1.9 -2.2 1.7 -2.2 0Z" fill="url(#gFlame)"/></g>
<g transform="translate(327.8 97.3) rotate(-40)"><path d="M-2.2 0C-2.2 -1.7 -0.4 -1.9 0.6 -1.5L3.2 0L0.6 1.5C-0.4 1.9 -2.2 1.7 -2.2 0Z" fill="url(#gFlame)"/></g>
<g transform="translate(316.6 101.6) rotate(180)"><path d="M-2.2 0C-2.2 -1.7 -0.4 -1.9 0.6 -1.5L3.2 0L0.6 1.5C-0.4 1.9 -2.2 1.7 -2.2 0Z" fill="url(#gFlame)"/></g>
<g transform="translate(330.4 101.6) rotate(0)"><path d="M-2.2 0C-2.2 -1.7 -0.4 -1.9 0.6 -1.5L3.2 0L0.6 1.5C-0.4 1.9 -2.2 1.7 -2.2 0Z" fill="url(#gFlame)"/></g>
<path d="M352.4 109.9H362L356 115.1H346.4Z" fill="url(#gLayer)" stroke="#1e1e1e" stroke-width="0.9" />
<path d="M352.4 106.2H362L356 111.4H346.4Z" fill="url(#gLayer)" stroke="#1e1e1e" stroke-width="0.9" />
<path d="M352.4 102.4H362L356 107.6H346.4Z" fill="url(#gLayer)" stroke="#1e1e1e" stroke-width="0.9" />
<path d="M347.8 132.2L354.2 125.8M358 142.4L364.4 136" fill="none" stroke="#f0f0f0" stroke-width="1.4" />
<path d="M351.6 129.6L361 139" fill="none" stroke="#6aa9ff" stroke-width="1.3" />
<path d="M350.60 128.60L354.21 129.80L351.80 132.21Z" fill="#6aa9ff" stroke="none" stroke-width="1" />
<path d="M362.00 140.00L358.39 138.80L360.80 136.39Z" fill="#6aa9ff" stroke="none" stroke-width="1" />
<path d="M426.4 126V140M441.4 126V140" fill="none" stroke="#f0f0f0" stroke-width="1.3" />
<path d="M427 130.4H441" fill="none" stroke="#f0f0f0" stroke-width="1.1" />
<path d="M427.2 130.4l2.7 -1.9v3.8Z" fill="#f0f0f0" stroke="none" stroke-width="1" />
<path d="M440.8 130.4l-2.7 -1.9v3.8Z" fill="#f0f0f0" stroke="none" stroke-width="1" />
<g transform="translate(433.6 136.2) scale(0.9)"><path d="M1.2 -4.2L-3.2 0.2L-0.6 0.4L-2.6 4.4L3.4 -0.6L0.6 -0.8Z" fill="url(#gBolt)" stroke="#e07000" stroke-width="0.5"/></g>
<path d="M481.4 127V140.6M488.5 127V140.6M495.5 127V140.6" fill="none" stroke="#f0f0f0" stroke-width="1.3" />
<path d="M482 131H488" fill="none" stroke="#f0f0f0" stroke-width="1" />
<path d="M482.2 131l2.3 -1.9v3.8Z" fill="#f0f0f0" stroke="none" stroke-width="1" />
<path d="M487.8 131l-2.3 -1.9v3.8Z" fill="#f0f0f0" stroke="none" stroke-width="1" />
<path d="M489 131H495" fill="none" stroke="#f0f0f0" stroke-width="1" />
<path d="M489.2 131l2.3 -1.9v3.8Z" fill="#f0f0f0" stroke="none" stroke-width="1" />
<path d="M494.8 131l-2.3 -1.9v3.8Z" fill="#f0f0f0" stroke="none" stroke-width="1" />
<path d="M548 82.4H553M556.4 82.4H559" fill="none" stroke="#ececec" stroke-width="1.3" />
<path d="M561.6 82.4l-3.6 -2.4v4.8Z" fill="#ececec" stroke="none" stroke-width="1" />
<path d="M562.6 79V86" fill="none" stroke="#ececec" stroke-width="1.3" />
<path d="M554.6 77V88" fill="none" stroke="#6fb0ff" stroke-width="1.4" />
<path d="M554.6 90.6l-2.4 -3h4.8Z" fill="#6fb0ff" stroke="none" stroke-width="1" />
<path d="M551 91.5H558.2" fill="none" stroke="#6fb0ff" stroke-width="1.3" />
<path d="M572.6 77V82.2M587.6 77V82.2M572.6 88V93.2M587.6 88V93.2" fill="none" stroke="#ececec" stroke-width="1.3" />
<path d="M573.2 79.6H587" fill="none" stroke="#ececec" stroke-width="1.1" />
<path d="M573.4 79.6l2.7 -1.9v3.8Z" fill="#ececec" stroke="none" stroke-width="1" />
<path d="M586.8 79.6l-2.7 -1.9v3.8Z" fill="#ececec" stroke="none" stroke-width="1" />
<path d="M573.2 90.6H587" fill="none" stroke="#ececec" stroke-width="1.1" />
<path d="M573.4 90.6l2.7 -1.9v3.8Z" fill="#ececec" stroke="none" stroke-width="1" />
<path d="M586.8 90.6l-2.7 -1.9v3.8Z" fill="#ececec" stroke="none" stroke-width="1" />
<path d="M577.6 83V87.6" fill="none" stroke="#ececec" stroke-width="1.2" stroke-dasharray="1 1"/>
<path d="M577.6 81.6l-1.6 1.6h3.2ZM577.6 89l-1.6 -1.6h3.2Z" fill="#ececec" stroke="none" stroke-width="1" />
<rect x="580" y="81.2" width="4" height="7.8" fill="#ffd400" />
<rect x="580.3" y="81.5" width="3.6" height="7.2" fill="none" stroke="#b86200" stroke-width="0.8"/>
<path d="M580.6 83.4h2M580.6 85.2h2M580.6 87h2" fill="none" stroke="#b86200" stroke-width="0.7" />
<path d="M598.5 84.6H601.6L603.6 78.6L607.6 91.6L609.8 84.6H612" fill="none" stroke="#ececec" stroke-width="1.2" stroke-linejoin="round"/>
<path d="M596 84.6l3.2 -2.6v5.2Z" fill="#ececec" stroke="none" stroke-width="1" />
<path d="M548.6 102V116.4M563.6 102V116.4" fill="none" stroke="#ececec" stroke-width="1.3" />
<path d="M549.2 106.4H563" fill="none" stroke="#ececec" stroke-width="1.1" />
<path d="M549.4 106.4l2.7 -1.9v3.8Z" fill="#ececec" stroke="none" stroke-width="1" />
<path d="M562.8 106.4l-2.7 -1.9v3.8Z" fill="#ececec" stroke="none" stroke-width="1" />
<path d="M551.6 113L554.6 116L560.6 110" fill="none" stroke="#3fae00" stroke-width="2.4" />
<path d="M572.6 101V115M587.6 101V115" fill="none" stroke="#ececec" stroke-width="1.3" />
<path d="M573.2 105.4H587" fill="none" stroke="#ececec" stroke-width="1.1" />
<path d="M573.4 105.4l2.7 -1.9v3.8Z" fill="#ececec" stroke="none" stroke-width="1" />
<path d="M586.8 105.4l-2.7 -1.9v3.8Z" fill="#ececec" stroke="none" stroke-width="1" />
<path d="M580 112.6A2.3 2.3 0 0 1 583.6 110.8M584.4 113.2A2.3 2.3 0 0 1 580.8 115" fill="none" stroke="#3fae00" stroke-width="1.2" />
<path d="M584.6 110l-2.4 -0.2l1.6 2ZM579.8 115.8l2.4 0.2l-1.6 -2Z" fill="#3fae00" stroke="none" stroke-width="1" />
<path d="M596 104.4H601.6" fill="none" stroke="#ececec" stroke-width="1.2" />
<path d="M603.8 104.4l-2.8 -2v4Z" fill="#ececec" stroke="none" stroke-width="1" />
<rect x="605" y="101" width="7.2" height="7.2" fill="#4d9bff" />
<rect x="606.2" y="102.2" width="4.8" height="4.8" fill="#fff" />
<path d="M607.2 103.2l2.8 2.8M610 103.2l-2.8 2.8" fill="none" stroke="#4d9bff" stroke-width="0.9" />
<path d="M596 110.4H600.4M599.6 110V117" fill="none" stroke="#c8c8c8" stroke-width="1.2" />
<rect x="602" y="109.8" width="1.2" height="1.2" fill="#ececec" />
<rect x="604.2" y="109.8" width="1.2" height="1.2" fill="#ececec" />
<rect x="606.2" y="109.8" width="1.2" height="1.2" fill="#ececec" />
<rect x="608.2" y="109.4" width="1.8" height="1.8" fill="#f4f4f4" />
<rect x="608.3" y="112.4" width="1.3" height="1.1" fill="#ececec" />
<rect x="608.3" y="114.6" width="1.3" height="1.1" fill="#ececec" />
<rect x="608.3" y="116.6" width="1.3" height="1.1" fill="#ececec" />
<path d="M649 86.2H642.6L635.2 103" fill="none" stroke="#ececec" stroke-width="1.2" />
<path d="M634.00 105.60L634.19 100.00L638.03 101.70Z" fill="#f4f4f4" stroke="none" stroke-width="1" />
<circle cx="655.6" cy="86.2" r="6.4" fill="url(#gBall)" stroke="#1c1c1c" stroke-width="1"/>
<path d="M696 101V115" fill="none" stroke="#ececec" stroke-width="1.2" />
<path d="M688.6 104.4C685 104.4 683 105 681 107.4" fill="none" stroke="#ececec" stroke-width="1.1" />
<path d="M680.00 109.40L680.56 105.91L683.04 107.60Z" fill="#ececec" stroke="none" stroke-width="1" />
<path d="M688.6 111C685.6 111 684.6 111.6 683 113.4" fill="none" stroke="#ececec" stroke-width="1.1" />
<path d="M682.00 115.60L682.72 112.14L685.12 113.94Z" fill="#ececec" stroke="none" stroke-width="1" />
<circle cx="691.6" cy="104.4" r="2.7" fill="url(#gBall)" stroke="#2a2a2a" stroke-width="0.8"/>
<circle cx="691.6" cy="111" r="2.7" fill="url(#gBall)" stroke="#2a2a2a" stroke-width="0.8"/>
<path d="M705.2 103.6H710M707.6 101.2V106" fill="none" stroke="#ececec" stroke-width="1.1" />
<path d="M713.6 105.4H711.4L706.296 115.08" fill="none" stroke="#ececec" stroke-width="1.1" />
<path d="M705.60 116.40L705.86 112.47L708.69 113.96Z" fill="#ececec" stroke="none" stroke-width="1" />
<circle cx="716.6" cy="105.4" r="2.7" fill="url(#gBall)" stroke="#2a2a2a" stroke-width="0.8"/>
<path d="M689 129.4H685.6L681.2 139.08" fill="none" stroke="#ececec" stroke-width="1.1" />
<path d="M680.60 140.40L680.63 136.46L683.55 137.78Z" fill="#ececec" stroke="none" stroke-width="1" />
<circle cx="692.6" cy="129.4" r="2.7" fill="url(#gBall)" stroke="#2a2a2a" stroke-width="0.8"/>
<circle cx="692.6" cy="136.4" r="2.7" fill="url(#gBall)" stroke="#2a2a2a" stroke-width="0.8"/>
<path d="M705.4 127l4.6 4.6M710 127l-4.6 4.6" fill="none" stroke="#e03a1c" stroke-width="1.2" />
<path d="M713.6 129.4H711.4L706.296 139.08" fill="none" stroke="#ececec" stroke-width="1.1" />
<path d="M705.60 140.40L705.86 136.47L708.69 137.96Z" fill="#ececec" stroke="none" stroke-width="1" />
<circle cx="716.6" cy="129.4" r="2.7" fill="url(#gBall)" stroke="#2a2a2a" stroke-width="0.8"/>
<rect x="885.2" y="77" width="28.6" height="28.8" fill="#141414" />
<rect x="886.2" y="78" width="26.6" height="26.8" fill="url(#gTable)" />
<rect x="886.2" y="78" width="26.6" height="3" fill="#7d88a4" />
<rect x="886.2" y="81" width="26.6" height="0.8" fill="#20242c" />
<path d="M892.8 82V104.6M899.6 82V104.6M906.4 82V104.6M886.4 87.4H912.8M886.4 93.2H912.8M886.4 99H912.8" fill="none" stroke="#b9bcc4" stroke-width="0.9" />
<rect x="925" y="104.4" width="13" height="10.4" fill="#2a2a2a" />
<rect x="926" y="105.4" width="11" height="8.4" fill="#f2f2f2" />
<path d="M929.5 107.9h6M929.5 109.9h6M929.5 111.9h6" fill="none" stroke="#9aa0ac" stroke-width="0.9" />
<rect x="924.6" y="101.2" width="4.2" height="3" fill="#f4f4f4" stroke="#222" stroke-width="0.9"/>
<rect x="924.6" y="105" width="4.2" height="3" fill="#f4f4f4" stroke="#222" stroke-width="0.9"/>
<path d="M932.6 111.4l3.6 4l3.6 -4h-2.2v-4.4h-2.8v4.4Z" fill="#1a4fa0" stroke="#0a2a66" stroke-width="0.4" />
<rect x="925" y="128.4" width="13" height="10.4" fill="#2a2a2a" />
<rect x="926" y="129.4" width="11" height="8.4" fill="#f2f2f2" />
<path d="M929.5 131.9h6M929.5 133.9h6M929.5 135.9h6" fill="none" stroke="#9aa0ac" stroke-width="0.9" />
<rect x="924.6" y="125.2" width="4.2" height="3" fill="#f4f4f4" stroke="#222" stroke-width="0.9"/>
<rect x="924.6" y="129" width="4.2" height="3" fill="#f4f4f4" stroke="#222" stroke-width="0.9"/>
<path d="M932.4 130l3.6 -4l3.6 4h-2.2v4h-2.8v-4Z" fill="#4d9bff" stroke="#e8f2ff" stroke-width="0.5" />
<rect x="948" y="101" width="10" height="11" fill="#2a2a2a" />
<rect x="949" y="102" width="9" height="9" fill="#e8e8e8" />
<rect x="950.4" y="104.4" width="3" height="3" fill="#1a4fa0" />
<rect x="953" y="108" width="6" height="6" fill="#1a4fa0" />
<rect x="954" y="109" width="4" height="4" fill="#cfe0ff" />
<rect x="948.6" y="125.4" width="4.2" height="3" fill="#f4f4f4" stroke="#222" stroke-width="0.9"/>
<rect x="948.6" y="129.2" width="4.2" height="3" fill="#f4f4f4" stroke="#222" stroke-width="0.9"/>
<rect x="949" y="133" width="8" height="6" fill="#2a2a2a" />
<rect x="950" y="134" width="7" height="4" fill="#e8e8e8" />
<rect x="953.6" y="128.4" width="3" height="10" fill="#1c1c1c" />
<path d="M17.5 802V852.5H67.5" fill="none" stroke="#e4e4e4" stroke-width="1" />
<rect x="13.5" y="847.5" width="9" height="9" fill="none" stroke="#e4e4e4" stroke-width="1"/>
<path d="M19.8 785L25.6 791.6L31.6 785M25.6 791.6V797.6" fill="none" stroke="#e4e4e4" stroke-width="1" />
<path d="M72.3 838.3L84.7 850.7M84.7 838.3L72.3 850.7" fill="none" stroke="#e4e4e4" stroke-width="1" />
<rect x="1" y="1" width="39" height="1" fill="#f0f0f0" />
<rect x="1" y="2" width="1" height="38" fill="#d6d6d6" />
<rect x="39" y="2" width="1" height="38" fill="#bcbcbc" />
<path d="M16.4 5.2L28 25.4H4.8Z" fill="url(#gRedA)" stroke="none" stroke-width="1" />
<path d="M16.4 5.2L28 25.4H19.6L21.6 15.2Z" fill="#8a0c10" stroke="none" stroke-width="1" opacity="0.5"/>
<path d="M9 20.8L22.2 15.2L22.6 16.6L9.8 22Z" fill="#6e080c" stroke="none" stroke-width="1" opacity="0.55"/>
<path d="M5 25.2H11.9L11.3 29.7L8 29.9Z" fill="url(#gFoot)" stroke="none" stroke-width="1" />
<path d="M20.3 25.2H27.8L24.7 29.9L21.1 29.5Z" fill="url(#gFoot)" stroke="none" stroke-width="1" />
<path d="M30.8 18.2H38.2L34.5 22.8Z" fill="#f4f4f4" stroke="none" stroke-width="1" transform="translate(0 0.9)"/>
<path d="M30.8 18.2H38.2L34.5 22.6Z" fill="#363d4a" stroke="none" stroke-width="1" />
<path d="M50.6 6.6H61.4L65.4 10.4V18.4H50.6Z" fill="url(#gDocI)" stroke="#30343c" stroke-width="1" />
<path d="M61.4 6.6V10.4H65.4" fill="#fff" stroke="#30343c" stroke-width="0.9" />
<path d="M74.6 15.8V7.4Q74.6 6.4 75.6 6.4H79.4L80.6 7.8H85Q86 7.8 86 8.8V10.4" fill="#d5d9e2" stroke="#30343c" stroke-width="1" />
<path d="M74.6 16.2L78.6 10.6H89.6L85.4 16.2Z" fill="url(#gFold)" stroke="#30343c" stroke-width="1" />
<path d="M99.4 4.6H112.4V17.4H100.6L99.4 16.2Z" fill="#5b6578" stroke="#3a4252" stroke-width="0.8" />
<rect x="102" y="5" width="7.8" height="5.4" fill="url(#gDocI)" />
<rect x="102.8" y="12.4" width="6.6" height="4.6" fill="#eef0f4" />
<rect x="103.8" y="13.4" width="1.6" height="2.8" fill="#3a4252" />
<path d="M122.4 4.6H135.4V17.4H123.6L122.4 16.2Z" fill="#5b6578" stroke="#3a4252" stroke-width="0.8" />
<rect x="125" y="5" width="7.8" height="5.4" fill="url(#gDocI)" />
<rect x="125.8" y="12.4" width="6.6" height="4.6" fill="#eef0f4" />
<rect x="126.8" y="13.4" width="1.6" height="2.8" fill="#3a4252" />
<path d="M130.2 14.4L135.4 6.4L138 8.2L132.8 16.2L129.8 17.2Z" fill="#ffb400" stroke="#7a4a00" stroke-width="0.6" />
<path d="M135.4 6.4L136.4 5L139 6.8L138 8.2Z" fill="#d86a2a" stroke="none" stroke-width="1" />
<path d="M130.2 14.4L129.8 17.2L132.8 16.2Z" fill="#f4f4f4" stroke="#555" stroke-width="0.4" />
<path d="M131.4 13.6L136 6.8" fill="none" stroke="#fff6c0" stroke-width="0.8" />
<path d="M149.4 10V5Q149.4 4.4 150 4.4H158.4Q159 4.4 159 5V10" fill="#fafafa" stroke="#4a5262" stroke-width="0.9" />
<path d="M146.4 16V10.4Q146.4 9 147.8 9H160.6Q162 9 162 10.4V16Z" fill="url(#gPrn)" stroke="#4a5262" stroke-width="0.9" />
<path d="M149.4 14.2H159V18.4H149.4Z" fill="#fff" stroke="#4a5262" stroke-width="0.9" />
<rect x="150.8" y="15.6" width="6.8" height="1.6" fill="#8ab8ee" />
<path d="M170.6 11.4L176.4 6V9.2H180Q184.6 9.2 184.6 13.6V17.6H181.4V14.4Q181.4 12.8 179.6 12.8H176.4V16.4Z" fill="#eceef4" stroke="#4c5260" stroke-width="0.9" />
<path d="M193 10.2H198.2L195.6 13.4Z" fill="#fff" stroke="none" stroke-width="1" />
<path d="M221.4 11.4L215.6 6V9.2H212Q207.4 9.2 207.4 13.6V17.6H210.6V14.4Q210.6 12.8 212.4 12.8H215.6V16.4Z" fill="#a9a9a9" stroke="#787878" stroke-width="0.9" />
<path d="M229 10.2H234.2L231.6 13.4Z" fill="#fff" stroke="none" stroke-width="1" />
<path d="M242.2 8.6H250.2" fill="none" stroke="#fff" stroke-width="1.4" />
<path d="M242.2 11H250.2L246.2 15.2Z" fill="#fff" stroke="none" stroke-width="1" />
<path d="M112 870C115.3 870 115.3 887.6 118 887.6L160.8 887.6C165.165 887.6 165.165 870 170.5 870Z" fill="#565656" stroke="#6c6c6c" stroke-width="0.9"/>
<path d="M58 870C61.19 870 61.19 887.6 63.8 887.6L106.5 887.6C109.425 887.6 109.425 870 113 870Z" fill="#565656" stroke="#6c6c6c" stroke-width="0.9"/>
<path d="M7 870C13.05 870 13.05 887.6 18 887.6L51.8 887.6C55.265 887.6 55.265 870 59.5 870Z" fill="url(#gLay)" stroke="#909090" stroke-width="0.9"/>
<rect x="0" y="870" width="200" height="1" fill="#5c5c5c" />
<path d="M178 870H193.4C193.4 878 190 886.6 181 886.6H170.5C176 884 176 872 178 870Z" fill="#505050" stroke="none" stroke-width="1" />
<path d="M178 879.1h8M182 875.1v8" fill="none" stroke="#dcdcdc" stroke-width="2" />
<path d="M165 410.7L212.8 362.9" fill="none" stroke="#22e6e6" stroke-width="1.1" />
<path d="M346.2 591.6L377.4 560.4" fill="none" stroke="#22e6e6" stroke-width="1.1" />
<path d="M209 371.2L378 540.2" fill="none" stroke="#16ecec" stroke-width="1" />
<path d="M207.80 369.80L224.70 382.17L220.17 386.70Z" fill="#0d8c8c" stroke="none" stroke-width="1" />
<path d="M386.40 548.40L369.50 536.03L374.03 531.50Z" fill="#0d8c8c" stroke="none" stroke-width="1" />
<path d="M319 521.5H400M359.5 481V562" fill="none" stroke="#ffffff" stroke-width="1" />
<rect x="375.5" y="538.5" width="133" height="24" fill="#1b1b5e" stroke="#cfc78a" stroke-width="1"/>
<rect x="494" y="547" width="10" height="10" fill="#f4f4f4" />
<rect x="494" y="556" width="10" height="1.4" fill="#2a2aa0" />
<path d="M497.8 548.2v2.6h-2l3.2 3l3.2 -3h-2v-2.6Z" fill="#333" stroke="none" stroke-width="1" />
<rect x="512.1" y="538.5" width="66.6" height="21" fill="#ffffff" stroke="#cfc78a" stroke-width="1"/>
<rect x="515" y="541" width="53.6" height="16" fill="#3399ff" />
<rect x="582.5" y="538.5" width="66" height="21" fill="#1b1b5e" stroke="#cfc78a" stroke-width="1"/>
<rect x="594.4" y="785.4" width="239.6" height="14.6" rx="2.2" fill="#4f4f4f"/>
<rect x="594.4" y="805.4" width="153.6" height="14.6" rx="2.2" fill="#4f4f4f"/>
<rect x="594.4" y="825.4" width="108" height="14.6" rx="2.2" fill="#5a5a5a"/>
<path d="M535.5 846.5q0 -2.6 2.6 -2.6H589V869.4H538.1q-2.6 0 -2.6 -2.6Z" fill="url(#gCmd)" stroke="#767676" stroke-width="1"/>
<rect x="539" y="847.6" width="2" height="2" fill="#c4c4c4" />
<rect x="542" y="847.6" width="2" height="2" fill="#c4c4c4" />
<rect x="539" y="850.6" width="2" height="2" fill="#c4c4c4" />
<rect x="542" y="850.6" width="2" height="2" fill="#c4c4c4" />
<rect x="539" y="853.6" width="2" height="2" fill="#c4c4c4" />
<rect x="542" y="853.6" width="2" height="2" fill="#c4c4c4" />
<rect x="539" y="856.6" width="2" height="2" fill="#c4c4c4" />
<rect x="542" y="856.6" width="2" height="2" fill="#c4c4c4" />
<rect x="539" y="859.6" width="2" height="2" fill="#c4c4c4" />
<rect x="542" y="859.6" width="2" height="2" fill="#c4c4c4" />
<rect x="539" y="862.6" width="2" height="2" fill="#c4c4c4" />
<rect x="542" y="862.6" width="2" height="2" fill="#c4c4c4" />
<path d="M550.6 852.6l8 7.4M558.6 852.6l-8 7.4" fill="none" stroke="#f4f4f4" stroke-width="2.3" />
<g transform="translate(576.6 855.8) rotate(-45)"><path d="M-1.5 -2.5V7.6Q0 9.4 1.5 7.6V-2.5Z" fill="#f6f6f6" stroke="#1e1e1e" stroke-width="0.9"/><path d="M-1.35 -8.1A3.7 3.7 0 1 0 1.35 -8.1V-5.2H-1.35Z" fill="#f6f6f6" stroke="#1e1e1e" stroke-width="0.9"/><path d="M-0.9 -1.4V6.6" stroke="#c8c8c8" stroke-width="0.7"/></g>
<path d="M588.6 846.6q0 -2.6 2.6 -2.6H988.6V868.6H591.2q-2.6 0 -2.6 -2.6Z" fill="#ffffff"/>
<path d="M597.1 851.5L606.1 860.5M597.1 851.2V855.4M596.8 851.5H601M606.1 860.8V856.6M606.4 860.5H602.2" fill="none" stroke="#4f9bf6" stroke-width="1" />
<path d="M611.2 854.2h6.4l-3.2 3.4Z" fill="#8c8c8c" stroke="none" stroke-width="1" />
<rect x="706" y="848.4" width="74" height="16.2" rx="2.5" fill="#d6d6d6"/>
<rect x="784.6" y="848.4" width="49" height="16.2" rx="2.5" fill="#d6d6d6"/>
<rect x="837.6" y="848.4" width="49" height="16.2" rx="2.5" fill="#d6d6d6"/>
<rect x="821" y="870" width="140" height="26" fill="#6e6e6e" />
<rect x="822.4" y="871.4" width="140" height="24.2" fill="#4e4e4e" />
<rect x="821" y="896" width="140" height="2" fill="#3a3a3a" />
</svg>
<span class="t s" style="left:55.0px;top:27.3px;font-size:12px;line-height:14px;width:26.0px;color:#ececec">文件</span>
<span class="t" style="left:79.00px;top:27.34px;font-size:12px;line-height:14px;color:#ececec">(F)</span>
<span class="t s" style="left:117.0px;top:27.3px;font-size:12px;line-height:14px;width:26.0px;color:#ececec">编辑</span>
<span class="t" style="left:141.00px;top:27.34px;font-size:12px;line-height:14px;color:#ececec">(E)</span>
<span class="t s" style="left:180.0px;top:27.3px;font-size:12px;line-height:14px;width:26.0px;color:#ececec">视图</span>
<span class="t" style="left:204.00px;top:27.34px;font-size:12px;line-height:14px;color:#ececec">(V)</span>
<span class="t s" style="left:244.0px;top:27.3px;font-size:12px;line-height:14px;width:26.0px;color:#ececec">插入</span>
<span class="t" style="left:268.00px;top:27.34px;font-size:12px;line-height:14px;color:#ececec">(I)</span>
<span class="t s" style="left:304.0px;top:27.3px;font-size:12px;line-height:14px;width:26.0px;color:#ececec">格式</span>
<span class="t" style="left:328.00px;top:27.34px;font-size:12px;line-height:14px;color:#ececec">(O)</span>
<span class="t s" style="left:370.0px;top:27.3px;font-size:12px;line-height:14px;width:26.0px;color:#ececec">工具</span>
<span class="t" style="left:394.00px;top:27.34px;font-size:12px;line-height:14px;color:#ececec">(T)</span>
<span class="t s" style="left:432.5px;top:27.3px;font-size:12px;line-height:14px;width:26.0px;color:#ececec">绘图</span>
<span class="t" style="left:456.50px;top:27.34px;font-size:12px;line-height:14px;color:#ececec">(D)</span>
<span class="t s" style="left:498.0px;top:27.3px;font-size:12px;line-height:14px;width:26.0px;color:#ececec">标注</span>
<span class="t" style="left:522.00px;top:27.34px;font-size:12px;line-height:14px;color:#ececec">(N)</span>
<span class="t s" style="left:564.0px;top:27.3px;font-size:12px;line-height:14px;width:26.0px;color:#ececec">修改</span>
<span class="t" style="left:588.00px;top:27.34px;font-size:12px;line-height:14px;color:#ececec">(M)</span>
<span class="t s" style="left:632.0px;top:27.3px;font-size:12px;line-height:14px;width:26.0px;color:#ececec">参数</span>
<span class="t" style="left:656.00px;top:27.34px;font-size:12px;line-height:14px;color:#ececec">(P)</span>
<span class="t s" style="left:695.0px;top:27.3px;font-size:12px;line-height:14px;width:26.0px;color:#ececec">窗口</span>
<span class="t" style="left:719.00px;top:27.34px;font-size:12px;line-height:14px;color:#ececec">(W)</span>
<span class="t s" style="left:763.0px;top:27.3px;font-size:12px;line-height:14px;width:26.0px;color:#ececec">帮助</span>
<span class="t" style="left:787.00px;top:27.34px;font-size:12px;line-height:14px;color:#ececec">(H)</span>
<span class="t" style="left:492.60px;top:2.56px;font-size:16px;line-height:19px;color:#111;letter-spacing:0.13px">Autodesk AutoCAD 2016</span>
<span class="t" style="left:690.60px;top:2.56px;font-size:16px;line-height:19px;color:#111;letter-spacing:0.15px">Drawing1.dwg</span>
<span class="t s" style="left:13.0px;top:49.6px;font-size:12px;line-height:14px;width:26.0px;color:#e4e4e4">默认</span>
<span class="t s" style="left:57.0px;top:49.6px;font-size:12px;line-height:14px;width:26.0px;color:#e4e4e4">插入</span>
<span class="t s" style="left:101.0px;top:49.6px;font-size:12px;line-height:14px;width:26.0px;color:#e4e4e4">注释</span>
<span class="t s" style="left:145.0px;top:49.6px;font-size:12px;line-height:14px;width:38.0px;color:#e4e4e4">参数化</span>
<span class="t s" style="left:201.0px;top:49.6px;font-size:12px;line-height:14px;width:26.0px;color:#e4e4e4">视图</span>
<span class="t s" style="left:245.0px;top:49.6px;font-size:12px;line-height:14px;width:26.0px;color:#e4e4e4">管理</span>
<span class="t s" style="left:289.0px;top:49.6px;font-size:12px;line-height:14px;width:26.0px;color:#e4e4e4">输出</span>
<span class="t h" style="left:30px;top:74px;font-size:30px;line-height:34px">A</span>
<span class="t s" style="left:15.0px;top:113.2px;font-size:12px;line-height:14px;width:50.0px;color:#ececec">多行文字</span>
<span class="t" style="left:103.50px;top:77.50px;font-size:13px;line-height:16px;color:#ececec">Standard</span>
<span class="t" style="left:103.5px;top:101.8px;font-size:11.5px;line-height:14px;width:48.0px;color:#b4b4b4;font-style:italic">查找文字</span>
<span class="t" style="left:104.00px;top:126.47px;font-size:12.2px;line-height:15px;color:#ececec">2.5</span>
<span class="t s" style="left:312.0px;top:113.2px;font-size:12px;line-height:14px;width:26.0px;color:#ececec">标注</span>
<span class="t" style="left:347.50px;top:77.50px;font-size:13px;line-height:16px;color:#ececec;letter-spacing:0.5px">1 : 1</span>
<span class="t s" style="left:385.0px;top:102.3px;font-size:12px;line-height:14px;width:62.0px;color:#ececec">使用当前项</span>
<span class="t s" style="left:369.0px;top:127.8px;font-size:12px;line-height:14px;width:38.0px;color:#ececec">已对齐</span>
<span class="t s" style="left:447.0px;top:127.8px;font-size:12px;line-height:14px;width:26.0px;color:#ececec">快速</span>
<span class="t s" style="left:501.0px;top:127.8px;font-size:12px;line-height:14px;width:26.0px;color:#ececec">连续</span>
<span class="t s" style="left:624.0px;top:113.2px;font-size:12px;line-height:14px;width:50.0px;color:#ececec">多重引线</span>
<span class="t s" style="left:679.5px;top:78.8px;font-size:12px;line-height:14px;width:26.0px;color:#ececec">直线</span>
<span class="t" style="left:703.50px;top:78.84px;font-size:12px;line-height:14px;color:#ececec">_</span>
<span class="t s" style="left:710.2px;top:78.8px;font-size:12px;line-height:14px;width:26.0px;color:#ececec">箭头</span>
<span class="t s" style="left:725.0px;top:102.3px;font-size:12px;line-height:14px;width:50.0px;color:#ececec">添加引线</span>
<span class="t s" style="left:725.0px;top:127.6px;font-size:12px;line-height:14px;width:50.0px;color:#ececec">删除引线</span>
<span class="t s" style="left:888.0px;top:113.2px;font-size:12px;line-height:14px;width:26.0px;color:#ececec">表格</span>
<span class="t" style="left:923.00px;top:77.50px;font-size:13px;line-height:16px;color:#ececec">Stand</span>
<span class="t s" style="left:32.0px;top:173.0px;font-size:12px;line-height:14px;width:26.0px;color:#b4b4b4">开始</span>
<span class="t" style="left:155.40px;top:171.50px;font-size:13px;line-height:16px;color:#f2f2f2">Drawing1*</span>
<span class="t" style="left:4.00px;top:199.32px;font-size:13.5px;line-height:16px;color:#dcdcdc;letter-spacing:0.35px">[−][</span>
<span class="t" style="left:24.5px;top:200.8px;font-size:12px;line-height:14px;width:26.0px;color:#dcdcdc">俯视</span>
<span class="t" style="left:48.54px;top:199.32px;font-size:13.5px;line-height:16px;color:#dcdcdc;letter-spacing:0.35px">][</span>
<span class="t" style="left:56.7px;top:200.8px;font-size:12px;line-height:14px;width:50.0px;color:#dcdcdc">二维线框</span>
<span class="t" style="left:104.74px;top:199.32px;font-size:13.5px;line-height:16px;color:#dcdcdc;letter-spacing:0.35px">]</span>
<span class="t" style="left:78.60px;top:76.64px;font-size:6.8px;line-height:8px;color:#f4f4f4;font-weight:bold;letter-spacing:0.75px">ABC</span>
<span class="t" style="left:287.60px;top:103.35px;font-size:6.2px;line-height:7px;color:#ffffff;font-weight:bold;letter-spacing:0.1px">ABC</span>
<span class="t" style="left:23.0px;top:872.4px;font-size:12px;line-height:14px;width:26.0px;color:#ffffff;font-weight:bold">模型</span>
<span class="t s" style="left:70.0px;top:872.4px;font-size:12px;line-height:14px;width:26.0px;color:#c4c4c4">布局</span>
<span class="t" style="left:94.00px;top:872.44px;font-size:12px;line-height:14px;color:#c4c4c4">1</span>
<span class="t s" style="left:124.0px;top:872.4px;font-size:12px;line-height:14px;width:26.0px;color:#c4c4c4">布局</span>
<span class="t" style="left:148.00px;top:872.44px;font-size:12px;line-height:14px;color:#c4c4c4">2</span>
<span class="t" style="left:276.9px;top:414.1px;font-size:23px;line-height:23px;color:#18f0f0;transform:rotate(45deg);transform-origin:0 100%">39.72</span>
<span class="t" style="left:379.4px;top:542.2px;font-size:12px;line-height:14px;width:98.0px;color:#e6dc9c">指定尺寸线位置或</span>
<span class="t" style="left:516.00px;top:542.24px;font-size:12px;line-height:14px;color:#ffffff">199.0442</span>
<span class="t" style="left:586.40px;top:542.24px;font-size:12px;line-height:14px;color:#e6dc9c">478.9311</span>
<span class="t" style="left:596.8px;top:784.9px;font-size:13px;line-height:16px;width:158.0px;color:#cdcdcd">指定第一个尺寸界线原点或</span>
<span class="t" style="left:752.80px;top:786.69px;font-size:11px;line-height:13px;color:#cdcdcd;font-family:'Liberation Mono',monospace"> &lt;</span>
<span class="t" style="left:766.0px;top:784.9px;font-size:13px;line-height:16px;width:54.0px;color:#cdcdcd">选择对象</span>
<span class="t" style="left:818.00px;top:786.69px;font-size:11px;line-height:13px;color:#cdcdcd;font-family:'Liberation Mono',monospace">&gt;:</span>
<span class="t" style="left:596.8px;top:804.9px;font-size:13px;line-height:16px;width:145.0px;color:#cdcdcd">指定第二条尺寸界线原点</span>
<span class="t" style="left:739.80px;top:806.69px;font-size:11px;line-height:13px;color:#cdcdcd;font-family:'Liberation Mono',monospace">:</span>
<span class="t" style="left:596.8px;top:824.9px;font-size:13px;line-height:16px;width:106.0px;color:#f2f2f2">指定尺寸线位置或</span>
<span class="t" style="left:624.20px;top:850.02px;font-size:11.5px;line-height:14px;color:#000;font-family:'Liberation Mono',monospace;-webkit-text-stroke:0.45px #000">DIMALIGNED</span>
<span class="t" style="left:699.60px;top:850.04px;font-size:12px;line-height:14px;color:#000;font-family:'Liberation Mono',monospace">[</span>
<span class="t" style="left:708.0px;top:848.6px;font-size:13px;line-height:16px;width:54.0px;color:#111">多行文字</span>
<span class="t" style="left:760.00px;top:850.04px;font-size:12px;line-height:14px;color:#111;font-family:'Liberation Mono',monospace">(</span>
<span class="t" style="left:766.30px;top:850.04px;font-size:12px;line-height:14px;color:#1432e6;font-family:'Liberation Mono',monospace">M</span>
<span class="t" style="left:772.80px;top:850.04px;font-size:12px;line-height:14px;color:#111;font-family:'Liberation Mono',monospace">)</span>
<span class="t" style="left:786.4px;top:848.6px;font-size:13px;line-height:16px;width:28.0px;color:#111">文字</span>
<span class="t" style="left:812.40px;top:850.04px;font-size:12px;line-height:14px;color:#111;font-family:'Liberation Mono',monospace">(</span>
<span class="t" style="left:818.70px;top:850.04px;font-size:12px;line-height:14px;color:#1432e6;font-family:'Liberation Mono',monospace">T</span>
<span class="t" style="left:825.20px;top:850.04px;font-size:12px;line-height:14px;color:#111;font-family:'Liberation Mono',monospace">)</span>
<span class="t" style="left:839.4px;top:848.6px;font-size:13px;line-height:16px;width:28.0px;color:#111">角度</span>
<span class="t" style="left:865.40px;top:850.04px;font-size:12px;line-height:14px;color:#111;font-family:'Liberation Mono',monospace">(</span>
<span class="t" style="left:871.70px;top:850.04px;font-size:12px;line-height:14px;color:#1432e6;font-family:'Liberation Mono',monospace">A</span>
<span class="t" style="left:878.20px;top:850.04px;font-size:12px;line-height:14px;color:#111;font-family:'Liberation Mono',monospace">)</span>
<span class="t" style="left:887.40px;top:850.04px;font-size:12px;line-height:14px;color:#000;font-family:'Liberation Mono',monospace">]:</span>
<span class="t" style="left:851.20px;top:876.13px;font-size:12.6px;line-height:15px;color:#f4f4f4;transform:scaleX(0.905);transform-origin:0 50%">199.0442, 478.9311,</span>
</div>
<div class="w" style="left:0px;top:0px;width:1600px;height:900px">
<svg class="a" width="1600" height="900" viewBox="0 0 1600 900">
<rect x="0" y="897" width="1600" height="3" fill="#4f8f52"/>
<rect x="0" y="897" width="1600" height="1" fill="#43784a"/>
<rect x="300" y="898" width="58" height="2" fill="#b7d6b8"/>
<rect x="424" y="898" width="58" height="2" fill="#a9cdaa"/>
<rect x="610" y="898" width="58" height="2" fill="#f2f6f2"/>
<rect x="735" y="898" width="57" height="2" fill="#9cc49e"/>
<rect x="952" y="898" width="90" height="2" fill="#a6cba8"/>
<rect x="1254" y="898" width="58" height="2" fill="#c6dfc7"/>
<rect x="1378" y="898" width="57" height="2" fill="#8fba92"/>
<path d="M585.5 493.3H624.5V472.4L663.6 514.6L624.5 556.6V535.5H585.5Z" fill="none" stroke="#e8101c" stroke-width="1.1"/>
<path d="M6.4 876.6L22 867.4L36.6 883.4L20 893.4Z" fill="url(#gCubeA)"/>
<path d="M22 867.4L25.4 857.8L40.6 874.8L36.6 883.4Z" fill="#22c41e"/>
<path d="M6.4 876.6Q9.4 862.4 25.4 857.8L22 867.4Z" fill="url(#gCubeC)"/>
<path d="M22 867.4L36.6 883.4" stroke="#c01818" stroke-width="0.9"/>
<path d="M22 867.4L25.4 857.8" stroke="#c8a000" stroke-width="0.6"/>
<g transform="translate(21.5 881) rotate(-28) skewX(18)"><path d="M-4.6 5.4L-0.4 -6.4L5 4.4M-2.8 1.2L3 0.8" fill="none" stroke="#ffffff" stroke-width="2"/></g>
<g transform="translate(31.6 870.6) rotate(48) skewX(-8)"><path d="M-4.6 -3.2H0.6C5.6 -3.2 5.6 3.4 0.6 3.4H-4.6Z" fill="none" stroke="#ffffff" stroke-width="1.9"/></g>
<path d="M21 862.2C16.6 862.8 11.6 866.6 10 871.4C12 871.4 13.4 870.4 14.4 869" fill="none" stroke="#ffffff" stroke-width="1.5" stroke-linecap="round"/>
</svg>
<span class="t" style="left:48px;top:860px;font-size:22px;line-height:24px;color:#12a9f6">CAD</span>
<span class="t" style="left:94.6px;top:861.4px;font-size:19.4px;line-height:23px;width:40.8px;color:#12a9f6">之家</span>
<span class="t" style="left:49.40px;top:883.47px;font-size:7.6px;line-height:9px;color:#8c8c8c;font-weight:bold;letter-spacing:1.15px">WWW.CADZJ.COM</span>
</div>
</body></html>
